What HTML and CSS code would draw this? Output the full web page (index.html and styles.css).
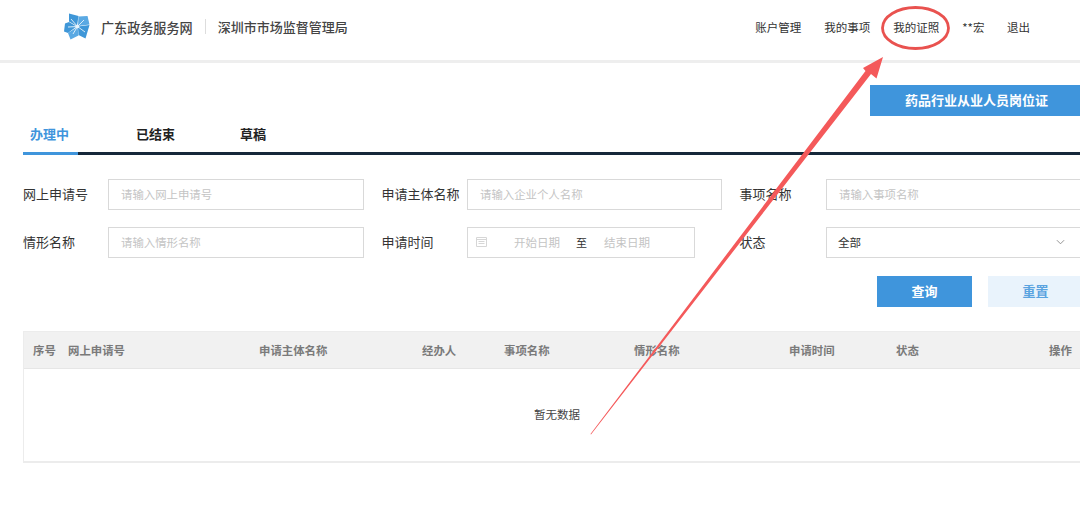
FILE: index.html
```html
<!DOCTYPE html>
<html lang="zh-CN">
<head>
<meta charset="utf-8">
<title>我的事项</title>
<link rel="stylesheet" href="styles.css">
</head>
<body>
<div class="page">
  <header class="topbar">
    <div class="brand">
      <svg class="logo" viewBox="0 0 26 27" aria-hidden="true">
        <path fill="#3f97d8" d="M5 0.500 L14.500 3 L13 13 L5 8.500 Z"/>
        <path fill="#5aa9e3" d="M14.500 3.500 L23.500 3 L25.500 11.500 L14 13 Z"/>
        <path fill="#3f97d8" d="M14 13.500 L25.500 12 L21.500 25.500 L14.500 22 Z"/>
        <path fill="#5aa9e3" d="M13.500 14 L14.500 22.500 L6.500 26.500 L4 20 Z"/>
        <path fill="#3f97d8" d="M12.500 13.500 L4 20 L0 18.500 L1 10.500 L5 9 Z"/>
        <circle cx="13.500" cy="13.500" r="1.800" fill="#e8f4fc"/>
        <path stroke="#e8f4fc" stroke-width="0.900" fill="none" d="M13.500 13.500 L7 6 M13.500 13.500 L20 7 M13.500 13.500 L21 19 M13.500 13.500 L9 21 M13.500 13.500 L4 14"/>
      </svg>
      <span class="brand-main">广东政务服务网</span>
      <span class="brand-sep"></span>
      <span class="brand-dept">深圳市市场监督管理局</span>
    </div>
    <nav class="nav">
      <a>账户管理</a>
      <a>我的事项</a>
      <a>我的证照</a>
      <a class="user">**宏</a>
      <a>退出</a>
    </nav>
  </header>

  <main class="content">
    <div class="actions-top"><button class="cert-btn">药品行业从业人员岗位证</button></div>

    <div class="tabs">
      <span class="tab active">办理中</span>
      <span class="tab tab-2">已结束</span>
      <span class="tab tab-3">草稿</span>
    </div>

    <form class="filters">
      <label class="lbl">网上申请号</label>
      <div class="field ph">请输入网上申请号</div>
      <label class="lbl inset">申请主体名称</label>
      <div class="field ph">请输入企业个人名称</div>
      <label class="lbl inset">事项名称</label>
      <div class="field ph">请输入事项名称</div>

      <label class="lbl">情形名称</label>
      <div class="field ph">请输入情形名称</div>
      <label class="lbl inset">申请时间</label>
      <div class="field date">
        <svg class="cal" viewBox="0 0 11 11" aria-hidden="true">
          <path fill="none" stroke="#d6d6d6" d="M.5 1.500h10v9H.5z"/>
          <path stroke="#d6d6d6" d="M.5 3.500h10M2.500 5.500h6M2.500 7.500h6"/>
        </svg>
        <span class="date-ph">开始日期</span>
        <span class="date-to">至</span>
        <span class="date-ph">结束日期</span>
      </div>
      <label class="lbl inset">状态</label>
      <div class="field select">
        <span>全部</span>
        <svg class="chev" viewBox="0 0 10 6" aria-hidden="true"><path fill="none" stroke="#888" d="M1 1l4 4 4-4"/></svg>
      </div>
    </form>

    <div class="buttons">
      <button class="btn primary">查询</button>
      <button class="btn ghost">重置</button>
    </div>

    <section class="table">
      <div class="thead">
        <span class="c c1">序号</span>
        <span class="c c2">网上申请号</span>
        <span class="c c3">申请主体名称</span>
        <span class="c c4">经办人</span>
        <span class="c c5">事项名称</span>
        <span class="c c6">情形名称</span>
        <span class="c c7">申请时间</span>
        <span class="c c8">状态</span>
        <span class="c c9">操作</span>
      </div>
      <div class="tbody">暂无数据</div>
    </section>
  </main>

  <svg class="annotation" viewBox="0 0 1080 513" aria-hidden="true">
    <ellipse cx="915.500" cy="28" rx="33" ry="20.500" fill="none" stroke="#e9524f" stroke-width="2.800"/>
    <path fill="#f4595a" d="M883 57 L876.500 78.500 L871 74 L591 434.500 L590.500 434 L865.500 71 L863 68 Z"/>
  </svg>
</div>
</body>
</html>
```
FILE: styles.css
```css
* { box-sizing: border-box; }
html, body { margin: 0; padding: 0; background: #fff; }
body {
  font-family: "Noto Sans CJK SC", "Liberation Sans", sans-serif;
  color: #333;
}
.page {
  position: relative;
  width: 1080px;
  height: 513px;
  overflow: hidden;
}
.topbar {
  display: flex;
  justify-content: space-between;
  align-items: center;
  height: 63px;
  padding: 0 50px 7px 64px;
  border-bottom: 3px solid #eeeeee;
}
.brand { display: flex; align-items: center; }
.logo { width: 26px; height: 27px; margin-right: 11px; }
.brand-main { font-size: 13.100px; color: #444; font-weight: 500; position: relative; top: 1px; }
.brand-sep { width: 1px; height: 15px; background: #ddd; margin: 0 12px; }
.brand-dept { font-size: 13px; color: #444; font-weight: 500; }
.nav { display: flex; gap: 23px; font-size: 11.500px; color: #333; }
.user { margin-right: -0.500px; }
.content { padding: 22px 0 0 23px; width: 1180px; }
.actions-top { padding-left: 847px; height: 31px; }
.cert-btn {
  width: 260px;
  height: 31px;
  padding: 0 0 2px 35px;
  text-align: left;
  border: 0;
  background: #3f95dc;
  color: #fff;
  font: 700 13px "Noto Sans CJK SC", sans-serif;
  white-space: nowrap;
}
.tabs {
  display: flex;
  margin-top: 9px;
  height: 30px;
  border-bottom: 3px solid #15283a;
  font-size: 13px;
  font-weight: 700;
  color: #222;
  align-items: flex-start;
}
.tab { line-height: 18px; }
.tab.active {
  width: 55px;
  height: 30px;
  padding-left: 7px;
  color: #3f95dc;
  border-bottom: 3px solid #3f95dc;
}
.tab-2 { margin-left: 58px; }
.tab-3 { margin-left: 65px; }
.filters {
  display: grid;
  grid-template-columns: 85px 256px 103px 255px 104px 270px;
  grid-auto-rows: 31px;
  row-gap: 17px;
  margin-top: 24px;
  align-items: center;
  font-size: 13px;
}
.lbl { color: #333; white-space: nowrap; padding-bottom: 2px; }
.lbl.inset { padding-left: 17.500px; }
.field {
  height: 31px;
  border: 1px solid #d9d9d9;
  display: flex;
  align-items: center;
  padding: 0 0 2px 12px;
  font-size: 11.400px;
  background: #fff;
}
.ph { color: #c4c4c4; }
.date { width: 228px; padding-left: 8px; }
.cal { width: 11px; height: 11px; flex: none; }
.date-ph { color: #c4c4c4; font-size: 11.500px; }
.cal + .date-ph { margin-left: 27px; }
.date-to { margin: 0 17px 0 16px; color: #333; font-size: 11px; }
.select { justify-content: space-between; padding: 0 30px 2px 11px; font-size: 11.500px; color: #333; }
.chev { width: 9px; height: 6px; flex: none; }
.buttons { display: flex; margin: 18px 0 0 854px; gap: 16px; height: 31px; }
.btn {
  width: 95px;
  height: 31px;
  padding: 0 0 2px;
  border: 0;
  font: 700 13px "Noto Sans CJK SC", sans-serif;
}
.primary { background: #3f95dc; color: #fff; }
.ghost { background: #e9f3fc; color: #5aa3e0; }
.table {
  margin-top: 24px;
  width: 1080px;
  height: 132px;
  border: 1px solid #ececec;
  border-bottom-width: 2px;
}
.thead {
  height: 37px;
  background: #f1f1f1;
  border-bottom: 1px solid #e6e6e6;
  font-size: 11.400px;
  font-weight: 700;
  color: #7a7a7a;
  display: grid;
  grid-template-columns: 35px 191px 163px 82px 130px 155px 107px 153px 1fr;
  align-items: center;
  padding-left: 9px;
}
.tbody {
  height: 92px;
  font-size: 11.500px;
  color: #444;
  padding-left: 510px;
  padding-top: 37px;
  line-height: 17px;
}
.annotation {
  position: absolute;
  left: 0;
  top: 0;
  width: 1080px;
  height: 513px;
  pointer-events: none;
}
```
